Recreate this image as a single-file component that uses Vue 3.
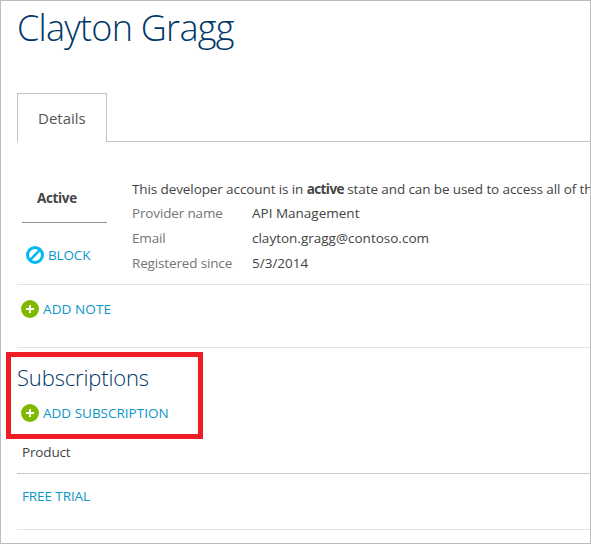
<script setup>
const facts = [
  { label: 'Provider name', value: 'API Management', kind: 'provider' },
  { label: 'Email', value: 'clayton.gragg@contoso.com', kind: 'email' },
  { label: 'Registered since', value: '5/3/2014', kind: 'date' },
]
</script>

<template>
  <main class="page">
    <h1><span>Clayton Gragg</span></h1>

    <nav class="tabs">
      <a class="tab">Details</a>
      <div class="tab-rest"></div>
    </nav>

    <section class="details">
      <div class="status">
        <div class="state">Active</div>
        <a class="action block">
          <svg width="18" height="18" viewBox="0 0 18 18">
            <circle cx="9" cy="9" r="7.5" fill="none" stroke="#00b9f2" stroke-width="3" />
            <path d="M4.2 13.8 13.8 4.2" stroke="#00b9f2" stroke-width="2.5" />
          </svg>
          <span>BLOCK</span>
        </a>
      </div>
      <div class="info">
        <p class="summary">This developer account is in <b>active</b> state and can be used to access all of the</p>
        <dl>
          <div v-for="f in facts" :key="f.kind" class="fact" :class="f.kind">
            <dt><span>{{ f.label }}</span></dt>
            <dd><span>{{ f.value }}</span></dd>
          </div>
        </dl>
      </div>
    </section>

    <section class="notes">
      <a class="action note">
        <svg width="18" height="18" viewBox="0 0 18 18">
          <circle cx="9" cy="9" r="9" fill="#7fba00" />
          <path d="M9 5v8M5 9h8" stroke="#fff" stroke-width="2" />
        </svg>
        <span>ADD NOTE</span>
      </a>
    </section>

    <section class="subscriptions">
      <div class="highlight"></div>
      <h2><span>Subscriptions</span></h2>
      <a class="action subscribe">
        <svg width="18" height="18" viewBox="0 0 18 18">
          <circle cx="9" cy="9" r="9" fill="#7fba00" />
          <path d="M9 5v8M5 9h8" stroke="#fff" stroke-width="2" />
        </svg>
        <span>ADD SUBSCRIPTION</span>
      </a>
      <div class="head"><span>Product</span></div>
      <div class="row"><a>FREE TRIAL</a></div>
    </section>
  </main>
</template>

<style>
body {
  margin: 0;
  background: #fff;
}
</style>

<style scoped>
.page {
  box-sizing: border-box;
  width: 591px;
  height: 544px;
  border: 1px solid #bdbdbd;
  padding-left: 16px;
  overflow: hidden;
  background: #fff;
  color: #444;
  font: 13.5px/20px "Open Sans", "Noto Sans", sans-serif;
}
h1, h2, p, dl, dt, dd {
  margin: 0;
  font-weight: 400;
}
h1 {
  box-sizing: border-box;
  height: 92px;
  padding-top: 2px;
  color: #003768;
  font-size: 36px;
  font-weight: 300;
  line-height: 50px;
  letter-spacing: -0.75px;
  white-space: nowrap;
}
.tabs {
  display: flex;
  height: 49px;
}
.tab {
  box-sizing: border-box;
  width: 90px;
  padding: 14px 0 0 20px;
  border: 1px solid #c4c4c4;
  border-bottom: 0;
  color: #555;
  font-size: 15px;
}
.tab-rest {
  flex: 1;
  border-bottom: 1px solid #c4c4c4;
}
.details {
  box-sizing: border-box;
  display: flex;
  height: 143px;
  padding-top: 37px;
  border-bottom: 1px solid #e2e2e2;
}
.status {
  width: 115px;
}
.state {
  box-sizing: border-box;
  width: 85px;
  height: 44px;
  margin-left: 5px;
  padding: 9px 0 0 15px;
  border-bottom: 1px solid #8f8f8f;
  font-weight: 700;
  letter-spacing: -0.35px;
}
.action {
  display: flex;
  align-items: center;
  height: 20px;
  color: #0d96c9;
  white-space: nowrap;
}
.action svg {
  flex: none;
  margin-right: 4px;
}
.block {
  margin: 22px 0 0 9px;
}
.block span {
  letter-spacing: -0.15px;
}
.note span {
  letter-spacing: 0.1px;
}
.info {
  flex: 1;
  min-width: 0;
}
.summary {
  white-space: nowrap;
  letter-spacing: -0.1px;
}
.summary b {
  letter-spacing: -0.6px;
}
dl {
  padding-top: 2px;
}
.fact {
  display: flex;
  height: 25px;
  line-height: 25px;
}
dt {
  width: 120px;
  color: #757575;
  letter-spacing: -0.15px;
}
.notes {
  box-sizing: border-box;
  height: 63px;
  padding: 14px 0 0 4px;
  border-bottom: 1px solid #e2e2e2;
}
.subscriptions {
  position: relative;
}
.highlight {
  position: absolute;
  box-sizing: border-box;
  top: 4px;
  left: -11px;
  width: 197px;
  height: 87px;
  border: 5px solid #ee1c25;
}
h2 {
  box-sizing: border-box;
  height: 55px;
  padding-top: 14px;
  color: #003768;
  font-size: 22px;
  font-weight: 300;
  line-height: 30px;
  letter-spacing: -0.15px;
}
.subscribe {
  margin-left: 4px;
}
.head {
  box-sizing: border-box;
  height: 51px;
  padding: 19px 0 0 5px;
  border-bottom: 1px solid #c8c8c8;
  letter-spacing: -0.15px;
}
.row {
  box-sizing: border-box;
  height: 56px;
  padding: 12px 0 0 5px;
  border-bottom: 1px solid #e2e2e2;
  color: #0d96c9;
  letter-spacing: -0.1px;
}
</style>
